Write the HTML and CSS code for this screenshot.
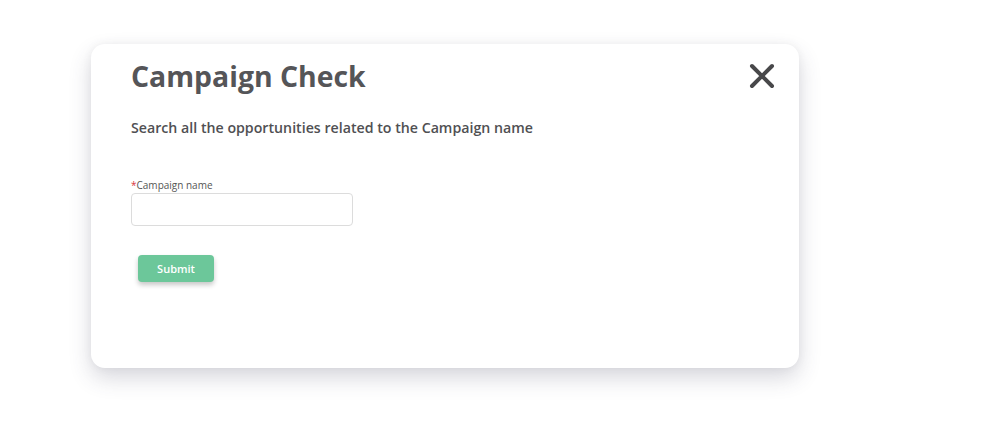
FILE: index.html
```html
<!DOCTYPE html>
<html lang="en">
<head>
<meta charset="utf-8">
<title>Campaign Check</title>
<link rel="stylesheet" href="styles.css">
</head>
<body>
<div class="page">
  <div class="modal">
    <div class="header">
      <h1 class="title">Campaign Check</h1>
      <button class="close" aria-label="Close">
        <svg width="26" height="26" viewBox="0 0 26 26"><path d="M3 3 L23 23 M23 3 L3 23" stroke="#48484a" stroke-width="4" stroke-linecap="round"/></svg>
      </button>
    </div>
    <p class="subtitle">Search all the opportunities related to the Campaign name</p>
    <div class="field">
      <label class="label"><span class="req">*</span>Campaign name</label>
      <input class="input" type="text">
    </div>
    <button class="submit">Submit</button>
  </div>
</div>
</body>
</html>
```

FILE: styles.css
```css
html, body {
  margin: 0;
  padding: 0;
  background: #ffffff;
}
body {
  font-family: "Open Sans", "Noto Sans", sans-serif;
  color: #555;
  min-height: 437px;
}
.page {
  box-sizing: border-box;
  min-height: 437px;
  padding: 44px 0 69px 91px;
}
.modal {
  box-sizing: border-box;
  width: 708px;
  height: 324px;
  background: #fff;
  border-radius: 14px;
  box-shadow: 0 10px 22px rgba(60, 60, 90, 0.2), 0 0 10px rgba(0, 0, 0, 0.05);
  padding: 12px 24px 0 40px;
  display: flex;
  flex-direction: column;
  align-items: flex-start;
}
.header {
  align-self: stretch;
  display: flex;
  justify-content: space-between;
  align-items: flex-start;
}
.title {
  margin: 0;
  font-size: 28.4px;
  font-weight: 700;
  line-height: 40px;
  color: #555558;
  letter-spacing: 0;
}
.close {
  border: 0;
  background: none;
  padding: 0;
  margin-top: 7px;
  width: 26px;
  height: 26px;
  cursor: pointer;
}
.close svg { display: block; }
.subtitle {
  margin: 22px 0 0 0;
  font-size: 14.2px;
  font-weight: 600;
  line-height: 20px;
  color: #505053;
}
.field {
  margin-top: 41px;
  display: flex;
  flex-direction: column;
}
.label {
  font-size: 10px;
  line-height: 13px;
  color: #555;
}
.req { color: #d9363e; }
.input {
  margin-top: 1px;
  box-sizing: border-box;
  width: 222px;
  height: 33px;
  border: 1px solid #dcdcdc;
  border-radius: 4px;
  background: #fff;
  outline: none;
}
.submit {
  margin: 29px 0 0 7px;
  width: 76px;
  height: 27px;
  border: 0;
  border-radius: 4px;
  background: #6cc79a;
  color: #fff;
  font-family: "Open Sans", "Noto Sans", sans-serif;
  font-size: 11px;
  font-weight: 600;
  box-shadow: 0 3px 5px rgba(0, 0, 0, 0.22);
  cursor: pointer;
}
```
